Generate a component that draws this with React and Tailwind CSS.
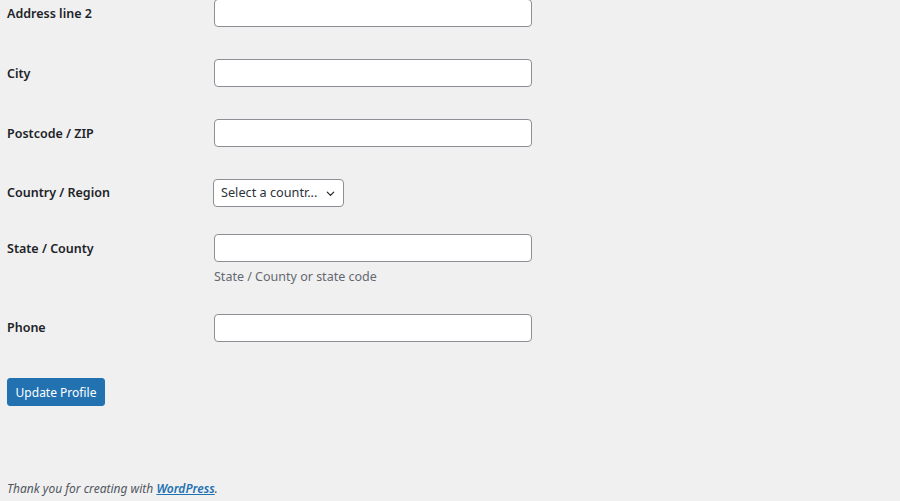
import React from 'react';

const font = { fontFamily: '"Noto Sans", "Open Sans", sans-serif' };

const Row = ({ label, children, rowClass = 'h-[60px]', labelClass = 'pt-[21px]' }) => (
  <div className={`flex ${rowClass}`}>
    <div className={`w-[207px] shrink-0 ${labelClass}`}>
      <label className="block text-[12.5px] leading-[18px] font-semibold text-[#1d2327]">{label}</label>
    </div>
    <div className="pt-[15px]">{children}</div>
  </div>
);

const TextInput = () => (
  <input
    type="text"
    className="block w-[318px] h-[28px] bg-white border border-[#8c8f94] rounded-[4px] px-2 text-[13px] outline-none"
  />
);

export default function App() {
  return (
    <div className="min-h-[501px] bg-[#f0f0f1] text-[#1d2327] pl-[7px] overflow-hidden" style={font}>
      <div className="-mt-[16px]">
        <Row label="Address line 2">
          <TextInput />
        </Row>
        <Row label="City">
          <TextInput />
        </Row>
        <Row label="Postcode / ZIP">
          <TextInput />
        </Row>
        <Row label="Country / Region" rowClass="h-[55px]" labelClass="pt-[20px]">
          <div className="-ml-px flex items-center w-[131px] h-[28px] bg-white border border-[#8c8f94] rounded-[4px] pl-[7px]">
            <span className="w-[104px] text-[12.7px] text-[#2c3338] whitespace-nowrap">Select a countr...</span>
            <svg width="11" height="11" viewBox="0 0 24 24" fill="none" stroke="#1d2327" strokeWidth="2.6" strokeLinecap="round" strokeLinejoin="round">
              <path d="M5 9l7 7 7-7" />
            </svg>
          </div>
        </Row>
        <Row label="State / County" rowClass="h-[80px]">
          <TextInput />
          <p className="mt-[6px] text-[12.5px] leading-[18px] text-[#646970]">State / County or state code</p>
        </Row>
        <Row label="Phone" labelClass="pt-[20px]">
          <TextInput />
        </Row>
      </div>
      <div className="pt-[19px]">
        <button className="h-[28px] w-[98px] pt-px bg-[#2271b1] border border-[#2271b1] rounded-[3px] text-white text-[12px] leading-none">
          Update Profile
        </button>
      </div>
      <div className="pt-[74px]">
        <p className="italic text-[12px] leading-[18px] text-[#50575e]">
          Thank you for creating with{' '}
          <a href="#" className="text-[#2271b1] font-semibold underline">WordPress</a>.
        </p>
      </div>
    </div>
  );
}
